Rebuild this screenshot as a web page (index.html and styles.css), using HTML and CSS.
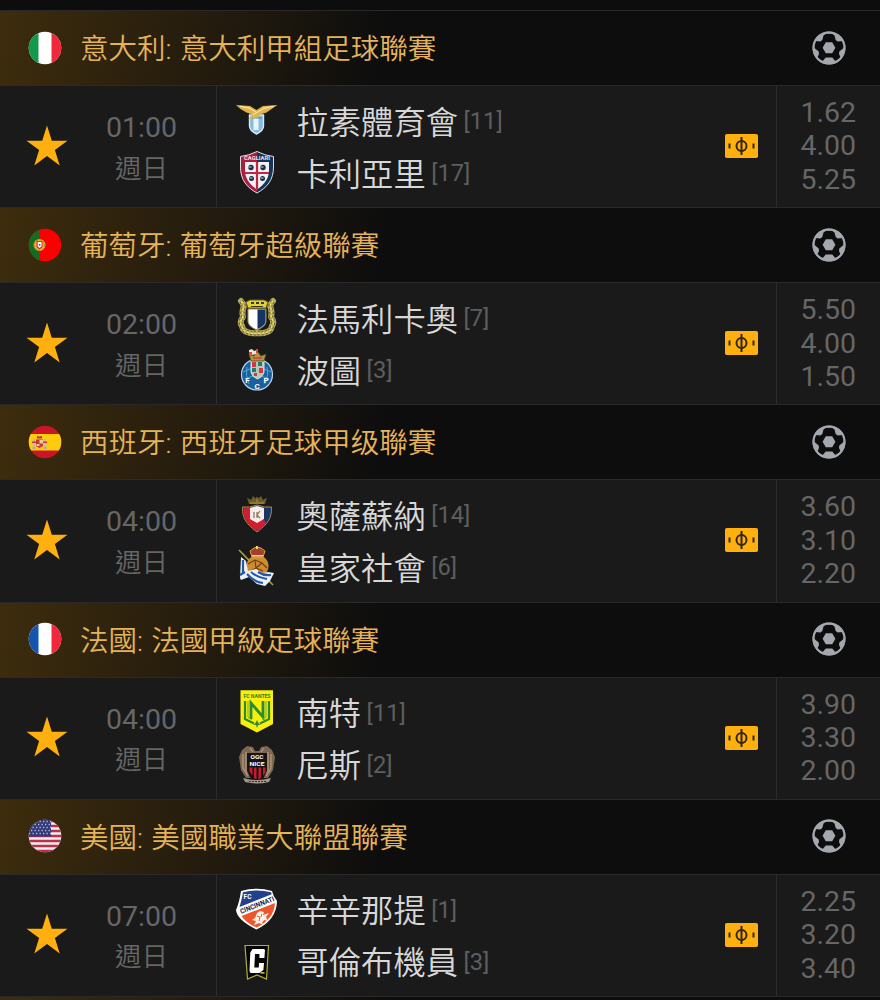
FILE: index.html
```html
<!DOCTYPE html>
<html lang="zh-Hant">
<head>
  <meta charset="UTF-8">
  <title>足球賽事</title>
  <meta name="viewport" content="width=device-width, initial-scale=1">
  <link rel="stylesheet" href="styles.css">
</head>
<body>
  <!-- shared icons -->
  <svg class="sprite" width="0" height="0">
    <defs>
      <clipPath id="round"><circle cx="17" cy="17" r="16.3"/></clipPath>
      <symbol id="star" viewBox="0 0 42 42">
        <path fill="#ffb00f" d="M21 .5l4.8 15.3 15.7-.1-12.6 9.4 4.8 15.4L21 31.1 8.3 40.5l4.8-15.4L.5 15.7l15.7.1z"/>
      </symbol>
      <symbol id="ball" viewBox="0 0 34 34">
        <circle cx="17" cy="17" r="16.5" fill="#a3a7ae"/>
        <path fill="#0d0d0d" d="M11.5 4.500L14 2.800h6l2.500 1.700 1.200 4.500 2 1.400 5-.4 1.300 3.200-.5 3.800-4.200 3.500-.3 2.500 1.600 3.500-2.600 3-3 .3-2.700-3.200H13.700L11 29.800l-3-.3-2.600-3L7 23l-.3-2.500L2.500 17 2 13.200 3.300 10l5 .4 2-1.400z"/>
        <path fill="#a3a7ae" d="M13.800 11.200h6.400l3.200 5.500-3.200 5.600h-6.400l-3.200-5.600z"/>
        <circle cx="17" cy="17" r="15.500" fill="none" stroke="#a3a7ae" stroke-width="2"/>
      </symbol>
      <symbol id="ticket" viewBox="0 0 34 24">
        <rect x="0" y="0" width="33" height="24" rx="1.8" fill="#ffb00f"/>
        <circle cx="16.500" cy="12" r="5" fill="none" stroke="#33260c" stroke-width="2"/>
        <path stroke="#33260c" stroke-width="2" d="M16.500 3v18M4.500 9.500v5M28.500 9.500v5"/>
      </symbol>
    </defs>
  </svg>

  <main class="board">
    <section class="league">
      <header class="league__head">
        <svg class="flag" viewBox="0 0 34 34"><g clip-path="url(#round)">
          <path fill="#fff" d="M0 0h34v34H0z"/><path fill="#119a4b" d="M0 0h10.500v34H0z"/><path fill="#f0283c" d="M23.500 0H34v34H23.500z"/>
        </g></svg>
        <h2 class="league__name">意大利: 意大利甲組足球聯賽</h2>
        <svg class="ball"><use href="#ball"/></svg>
      </header>
      <div class="match">
        <div class="match__info">
          <svg class="star"><use href="#star"/></svg>
          <div class="match__time">01:00<span class="match__day">週日</span></div>
        </div>
        <div class="match__teams">
          <div class="team">
            <svg class="crest" viewBox="0 0 44 44">
              <path fill="#86bce2" stroke="#d7ecf7" stroke-width="1.4" d="M14.500 17h14v11c0 4-3 6-7 8-4-2-7-4-7-8z"/>
              <path fill="#e9f5fb" d="M18.500 20h5v12h-5z"/><path fill="#3e83b8" d="M16 19.500h11v1H16z"/>
              <path fill="#dfb451" d="M1 7l14 1 6.500 4L28 8l14.500-1-6 4-5 3.500-5 1.500-4 3.500-4 .8-5 1.200 4-5-6-2-6-3.500z"/>
              <path stroke="#fff0a8" fill="none" d="M5 8.300l9 1.700 7 4M39 8.300l-10 2-7 4.200-4 2"/>
            </svg>
            <span class="team__name">拉素體育會</span><span class="team__rank">[11]</span>
          </div>
          <div class="team">
            <svg class="crest" viewBox="0 0 44 44">
              <path fill="#a91f3c" d="M22 43.500C12 38 5 30 5 17V6q9-1 17-5z"/>
              <path fill="#15345a" d="M22 43.500C32 38 39 30 39 17V6q-9-1-17-5z"/>
              <path fill="none" stroke="#d8dbe4" stroke-width="1" d="M22 43C12 37.500 5.500 30 5.500 17V6.500q8.500-.8 16.500-5 8 4.200 16.500 5V17c0 13-6.500 20.500-16.500 26z"/>
              <path fill="#f3f0f1" d="M10 12h24v8c0 8-4 14-12 19.500C14 34 10 28 10 20z"/>
              <path stroke="#bd2942" stroke-width="2.200" d="M22 12v27M10 23h24"/>
              <g fill="#172d4e"><circle cx="16" cy="17.500" r="2.700"/><circle cx="28" cy="17.500" r="2.700"/><circle cx="16.500" cy="28.500" r="2.500"/><circle cx="27.500" cy="28.500" r="2.500"/></g>
              <path stroke="#fff" stroke-width=".8" d="M13.500 17h3M25.500 17h3M14.500 28h3M25.500 28h3"/>
              <text x="22" y="10" class="crest__text" font-size="6" fill="#e7e7ee" textLength="26" lengthAdjust="spacingAndGlyphs">CAGLIARI</text>
            </svg>
            <span class="team__name">卡利亞里</span><span class="team__rank">[17]</span>
          </div>
        </div>
        <svg class="ticket"><use href="#ticket"/></svg>
        <div class="match__odds"><span>1.62</span><span>4.00</span><span>5.25</span></div>
      </div>
    </section>

    <section class="league">
      <header class="league__head">
        <svg class="flag" viewBox="0 0 34 34"><g clip-path="url(#round)">
          <path fill="#fb0000" d="M0 0h34v34H0z"/><path fill="#146b22" d="M0 0h11.500v34H0z"/>
          <circle cx="11.500" cy="17" r="6" fill="#e5b62b"/><circle cx="11.500" cy="17" r="5.300" fill="none" stroke="#8f842a" stroke-dasharray="2 1.500"/>
          <path fill="#e32922" d="M8.500 13h6v6l-3 2.500-3-2.500z"/><path fill="#fff" d="M9.700 14h3.800v4.300l-1.900 1.700-1.900-1.700z"/><circle cx="11.600" cy="16.800" r=".9" fill="#3b4c84"/>
        </g></svg>
        <h2 class="league__name">葡萄牙: 葡萄牙超級聯賽</h2>
        <svg class="ball"><use href="#ball"/></svg>
      </header>
      <div class="match">
        <div class="match__info">
          <svg class="star"><use href="#star"/></svg>
          <div class="match__time">02:00<span class="match__day">週日</span></div>
        </div>
        <div class="match__teams">
          <div class="team">
            <svg class="crest" viewBox="0 0 44 44">
              <path fill="none" stroke="#b7aa65" stroke-width="6" stroke-linecap="round" stroke-linejoin="round" d="M6 6q4 4 2 8 -1 4 0 8-4 5-1 9 1 5 5 6 5 2 10 1 5 1 10-1 4-1 5-6 3-4-1-9 1-4 0-8-2-4 2-8"/>
              <path fill="none" stroke="#6d6b2d" stroke-width="4.500" stroke-dasharray="2 1.800" d="M6 6q4 4 2 8 -1 4 0 8-4 5-1 9 1 5 5 6 5 2 10 1 5 1 10-1 4-1 5-6 3-4-1-9 1-4 0-8-2-4 2-8"/>
              <path fill="none" stroke="#f2df62" stroke-width="1.800" stroke-dasharray="2.500 1.300" d="M6 6q4 4 2 8 -1 4 0 8-4 5-1 9 1 5 5 6 5 2 10 1 5 1 10-1 4-1 5-6 3-4-1-9 1-4 0-8-2-4 2-8"/>
              <path fill="#e5d231" stroke="#615d24" d="M11 7l4-2h14l4 2-2 6H13z"/>
              <path fill="#35391f" d="M16 7h3v2h-3zm5 0h3v2h-3zm5 0h3v2h-3zM16 11h12v1H16z"/>
              <path fill="#fff" stroke="#9b914a" d="M13 14h18v12c0 4-4 7-9 9-5-2-9-5-9-9z"/>
              <path fill="#173564" d="M22.500 14.500h8V26c0 3.500-3.500 6-8 8z"/>
            </svg>
            <span class="team__name">法馬利卡奧</span><span class="team__rank">[7]</span>
          </div>
          <div class="team">
            <svg class="crest" viewBox="0 0 44 44">
              <circle cx="22" cy="27.500" r="15.500" fill="#1a5f9e" stroke="#bbd6e8" stroke-width="1.200"/>
              <path fill="none" stroke="#4ba8d8" d="M8 25q14-8 28 0M10 32q12-6 24 0M12 20q-2 8 2 17M32 20q2 8-2 17"/>
              <path fill="#b8c9b8" stroke="#e3e7dc" d="M16 13h13v11c0 4-3 6-6.500 8-3.500-2-6.500-4-6.500-8z"/>
              <path fill="#d0374a" d="M17 15h4v5h-4zm7 6h4v5h-4zm-5 5h3v3h-3z"/><path fill="#267d67" d="M23 15h4v4h-4zm-6 6h4v4h-4z"/>
              <path fill="#b4923f" stroke="#46512c" stroke-width=".8" d="M16 14l-2-7 5 2 3-5 4 5 5-2-2 7z"/>
              <path fill="#f0e4da" d="M14 3l3-1 2 2 3-1-1 4-4 1-3-2z"/><path fill="#d64a45" d="M14 5h3v3h-3zM21 2h2v4h-2zM18 10h9v2h-9z"/>
              <g class="crest__text" font-size="8" fill="#fff"><text x="12.500" y="36">F</text><text x="22" y="41.500">C</text><text x="31" y="36">P</text></g>
            </svg>
            <span class="team__name">波圖</span><span class="team__rank">[3]</span>
          </div>
        </div>
        <svg class="ticket"><use href="#ticket"/></svg>
        <div class="match__odds"><span>5.50</span><span>4.00</span><span>1.50</span></div>
      </div>
    </section>

    <section class="league">
      <header class="league__head">
        <svg class="flag" viewBox="0 0 34 34"><g clip-path="url(#round)">
          <path fill="#c91525" d="M0 0h34v34H0z"/><path fill="#ffcb0c" d="M0 9h34v16.500H0z"/>
          <path fill="#d8ba8a" d="M4.500 14h2.500v9H4.500zm11.500 0h2.500v9H16z"/><path fill="#c33a28" d="M8 14.500h7v6.500l-3.500 2L8 21zM4 16.500h4v1.500H4zm11 0h4v1.500h-4zM9 11h5v2.500H9z"/>
          <path fill="#e9c6ba" d="M11.500 15H15v3.500h-3.500zM8.500 19h3v2h-3zM10.500 10.500h2v1h-2z"/><path fill="#b8a7a0" d="M4.500 22h3v2h-3zm11 0h3v2h-3z"/>
        </g></svg>
        <h2 class="league__name">西班牙: 西班牙足球甲级聯賽</h2>
        <svg class="ball"><use href="#ball"/></svg>
      </header>
      <div class="match">
        <div class="match__info">
          <svg class="star"><use href="#star"/></svg>
          <div class="match__time">04:00<span class="match__day">週日</span></div>
        </div>
        <div class="match__teams">
          <div class="team">
            <svg class="crest" viewBox="0 0 44 44">
              <path fill="#6b5b27" d="M14 12L12 5.500l4 2.500 2-4 4 3.500L26 4l2 4 4-2.500L30 12z"/>
              <path stroke="#b09844" d="M15 11h14M22 5v5"/>
              <path fill="#193765" stroke="#b58c46" stroke-width="1" d="M7.500 15q7 1 14.500-2 7.500 3 14.500 2c0 9-1 15-14.500 25C8.500 30 7.500 24 7.500 15z"/>
              <path fill="#d51c31" d="M8.500 16q7 .5 10-1v12l3 12C9.500 30 8.500 24 8.500 16z"/>
              <path fill="#d51c31" d="M17 29l12-1 2 3q-3 4-9 8.500z"/>
              <path fill="#f5eee8" d="M15 16l7-2 7 2v11l-7 4-7-4z"/>
              <path fill="none" stroke="#8a7355" stroke-width="1.200" d="M19 20v6M25 19l-3 4 3 3M22 20v6"/>
            </svg>
            <span class="team__name">奧薩蘇納</span><span class="team__rank">[14]</span>
          </div>
          <div class="team">
            <svg class="crest" viewBox="0 0 44 44">
              <path stroke="#aaa23c" stroke-width="1.600" d="M4 6l34 35"/>
              <circle cx="22.500" cy="22" r="11" fill="#cf8b2e"/>
              <path fill="none" stroke="#6c3c12" stroke-width="1.100" d="M13 20l7-4 7 3 5 5M20 16l1 8-7 4M21 24l7 3M27 19l-6 5"/>
              <path fill="#a53e2a" stroke="#dfb44c" stroke-width=".9" d="M17 13l-2-6 4-3 3-1 4 1 4 3-2 6z"/>
              <path fill="#f0d278" d="M21 2h2v3h-2zM17 11h11v1.500H17z"/>
              <path fill="#efeff4" d="M6 13l5 4 2 10 8-2 6 4 6-1 6 1-4 8-5 5-8-2-8-7-8 3-1-2z"/>
              <path fill="none" stroke="#205ba9" stroke-width="2.200" d="M8 16v13M5 31l5-3M12 30q7 8 16 9M16 28q7 6 16 7M23 28q6 4 13 3"/>
            </svg>
            <span class="team__name">皇家社會</span><span class="team__rank">[6]</span>
          </div>
        </div>
        <svg class="ticket"><use href="#ticket"/></svg>
        <div class="match__odds"><span>3.60</span><span>3.10</span><span>2.20</span></div>
      </div>
    </section>

    <section class="league">
      <header class="league__head">
        <svg class="flag" viewBox="0 0 34 34"><g clip-path="url(#round)">
          <path fill="#fff" d="M0 0h34v34H0z"/><path fill="#1555ae" d="M0 0h10.500v34H0z"/><path fill="#f0283c" d="M23.500 0H34v34H23.500z"/>
        </g></svg>
        <h2 class="league__name">法國: 法國甲級足球聯賽</h2>
        <svg class="ball"><use href="#ball"/></svg>
      </header>
      <div class="match">
        <div class="match__info">
          <svg class="star"><use href="#star"/></svg>
          <div class="match__time">04:00<span class="match__day">週日</span></div>
        </div>
        <div class="match__teams">
          <div class="team">
            <svg class="crest" viewBox="0 0 44 44">
              <path fill="#faee0b" d="M5.500 .3h32.500V34l-16 8.500-16.500-8.500z"/>
              <text x="22" y="8" class="crest__text" font-size="5.500" fill="#31802d" textLength="27" lengthAdjust="spacingAndGlyphs">FC NANTES</text>
              <path fill="none" stroke="#2b8c37" stroke-width="2.200" d="M10 11v18l9 4.500M34 11v18l-9 4.500"/>
              <path fill="none" stroke="#2b8c37" stroke-width="2.800" d="M16 29V13l12 14V11"/>
              <path fill="none" stroke="#73ae26" stroke-width="1" d="M13 11v16l4 3M31 11v16l-4 3"/>
              <path fill="#2b8c37" d="M22 30l1.500 3 2 2H23l-1 3-1-3h-2.500l2-2z"/>
            </svg>
            <span class="team__name">南特</span><span class="team__rank">[11]</span>
          </div>
          <div class="team">
            <svg class="crest" viewBox="0 0 44 44">
              <path fill="#7b6753" d="M20 9l-2-4-6-1-5 4-3 7 2 13 5 8h22l5-8 2-13-3-7-5-4-6 1-2 4z"/>
              <path fill="none" stroke="#b69a7c" stroke-width="1.200" d="M8 12v14l5 8M11 10v18l4 5M36 12v14l-5 8M33 10v18l-4 5M15 6l3 4M29 6l-3 4"/>
              <path fill="#171313" d="M12 11h20v18l-4 8-6 3-6-3-4-8z"/>
              <path fill="#c51c31" d="M14.500 25.500h3v8l-3-4zm4.500 0h2.500v12L19 36zm4.500 0H26V36l-2.500 1.500zm4.500 0h2.500v5l-2.500 3z"/>
              <g class="crest__text" font-size="6" fill="#fff"><text x="22" y="17" textLength="13" lengthAdjust="spacingAndGlyphs">OGC</text><text x="22" y="24" textLength="15" lengthAdjust="spacingAndGlyphs">NICE</text></g>
              <path fill="#a1958e" d="M8 36q14 4 28 0l-2 4q-12 3-24 0z"/><path stroke="#40342f" stroke-dasharray="2 1" d="M14 39.500h17"/>
            </svg>
            <span class="team__name">尼斯</span><span class="team__rank">[2]</span>
          </div>
        </div>
        <svg class="ticket"><use href="#ticket"/></svg>
        <div class="match__odds"><span>3.90</span><span>3.30</span><span>2.00</span></div>
      </div>
    </section>

    <section class="league">
      <header class="league__head">
        <svg class="flag" viewBox="0 0 34 34"><g clip-path="url(#round)">
          <path fill="#f4ecee" d="M0 0h34v34H0z"/>
          <path stroke="#b8324d" stroke-width="2.500" d="M0 2h34M0 7h34M0 12h34M0 17h34M0 22h34M0 27h34M0 32h34"/>
          <path fill="#303879" d="M0 0h23v17.500H0z"/>
          <path stroke="#b8bedc" stroke-width="1.300" stroke-dasharray="1.300 2.200" d="M1 2.500h22M3 5.500h20M1 8.500h22M3 11.500h20M1 14.500h22"/>
        </g></svg>
        <h2 class="league__name">美國: 美國職業大聯盟聯賽</h2>
        <svg class="ball"><use href="#ball"/></svg>
      </header>
      <div class="match">
        <div class="match__info">
          <svg class="star"><use href="#star"/></svg>
          <div class="match__time">07:00<span class="match__day">週日</span></div>
        </div>
        <div class="match__teams">
          <div class="team">
            <svg class="crest" viewBox="0 0 44 44">
              <path fill="#fff" d="M6 4q16-4.500 31 0 1 5 5 10-.5 19-20.500 28.500Q2 33 1 23 4.500 15 6 4z"/>
              <path fill="#22418d" d="M8 5.300q14-3.800 28 0l.7 2L4.500 20Q7 12 8 5.300z"/>
              <path fill="#ef552d" d="M6.500 29L40 16Q39 32 21.700 40.500 11 36 6.500 29z"/>
              <text x="12.500" y="12" class="crest__text" font-size="6.500" fill="#fff">FC</text>
              <text x="22" y="20.500" class="crest__text" font-size="7" fill="#1b2644" textLength="36" lengthAdjust="spacingAndGlyphs" transform="rotate(-21.500 22 18)">CINCINNATI</text>
              <path fill="#fff3e8" d="M16 28l4 3 2-5 3-2 4 1-1 3 6-2-3 4 2 4-4-1-2 3 2 2-5-2-5 2 2-4-4-1 3-2z"/>
              <path fill="none" stroke="#ef552d" d="M22 29l3 1-1 4M27 27l-1 3"/>
            </svg>
            <span class="team__name">辛辛那提</span><span class="team__rank">[1]</span>
          </div>
          <div class="team">
            <svg class="crest" viewBox="0 0 44 44">
              <path fill="#050505" stroke="#b7ac35" stroke-width="1.200" d="M10 6.500h23.500l-2 33.500-9.500-4-9.500 4z"/>
              <path fill="#fff" d="M17.500 10H29l1 1-.6 8h-5V15H20l-.7 13.500h4.500L24 24h5l-.6 7-4 3H15.500l-1-2 .8-18.500z"/>
              <path fill="#c2b647" d="M25.500 33h4v1.700h-4z"/>
            </svg>
            <span class="team__name">哥倫布機員</span><span class="team__rank">[3]</span>
          </div>
        </div>
        <svg class="ticket"><use href="#ticket"/></svg>
        <div class="match__odds"><span>2.25</span><span>3.20</span><span>3.40</span></div>
      </div>
    </section>
    <div class="league__head league__head--next"></div>
  </main>
</body>
</html>
```
FILE: styles.css
```css
* {
  box-sizing: border-box;
}
body {
  margin: 0;
  height: 1000px;
  overflow: hidden;
  background-color: #0d0d0d;
  font-family: Roboto, "Noto Sans CJK TC", sans-serif;
}
.sprite {
  display: block;
}
.board {
  padding-top: 10px;
}
.league {
  height: 197.2px;
}
.league__head {
  display: flex;
  align-items: center;
  height: 75px;
  padding: 0 34.5px 1px 27.5px;
  border-top: 1px solid #292929;
  background: linear-gradient(100deg, #3e2d0d 0, #2b200d 150px, #1b160d 280px, #0d0d0d 385px);
}
.league__head--next {
  height: 12px;
}
.flag,
.ball {
  width: 34px;
  height: 34px;
  flex-shrink: 0;
}
.league__name {
  flex: 1;
  margin: 5px 0 0 18.5px;
  color: #e5b359;
  font-size: 28.5px;
  font-weight: 350;
  line-height: 40px;
  word-spacing: 1.3px;
  white-space: nowrap;
}
.match {
  display: flex;
  height: 122.2px;
  border-top: 1px solid #2a2a2a;
  background-color: #1a1a1a;
}
.match__info {
  display: flex;
  align-items: center;
  width: 217px;
  padding: 0 0 2px 26px;
  border-right: 1px solid #2c2c2c;
}
.star {
  width: 42px;
  height: 42px;
}
.match__time {
  width: 147px;
  padding-top: 6px;
  color: #666;
  font-size: 28.5px;
  line-height: 40.5px;
  text-align: center;
}
.match__day {
  display: block;
  font-size: 26.5px;
  font-weight: 350;
}
.match__teams {
  flex: 1;
  padding: 8px 0 0 17.5px;
}
.team {
  display: flex;
  align-items: center;
  height: 52px;
}
.crest {
  width: 44px;
  height: 44px;
}
.crest__text {
  font-family: Roboto, sans-serif;
  font-weight: 700;
  text-anchor: middle;
}
.team__name {
  margin: 5px 5.5px 0 18px;
  color: #d8d8d8;
  font-size: 32.3px;
  font-weight: 350;
  line-height: 48px;
}
.team__rank {
  padding-top: 2px;
  color: #5e5e5e;
  font-size: 23.7px;
  font-weight: 400;
}
.ticket {
  align-self: center;
  width: 34px;
  height: 24px;
  margin: 0 17px 1px 0;
}
.match__odds {
  display: flex;
  flex-direction: column;
  width: 104px;
  padding: 10px 24px 0 0;
  border-left: 1px solid #2c2c2c;
  color: #666;
  font-size: 28.5px;
  line-height: 33.4px;
  text-align: right;
}
```
